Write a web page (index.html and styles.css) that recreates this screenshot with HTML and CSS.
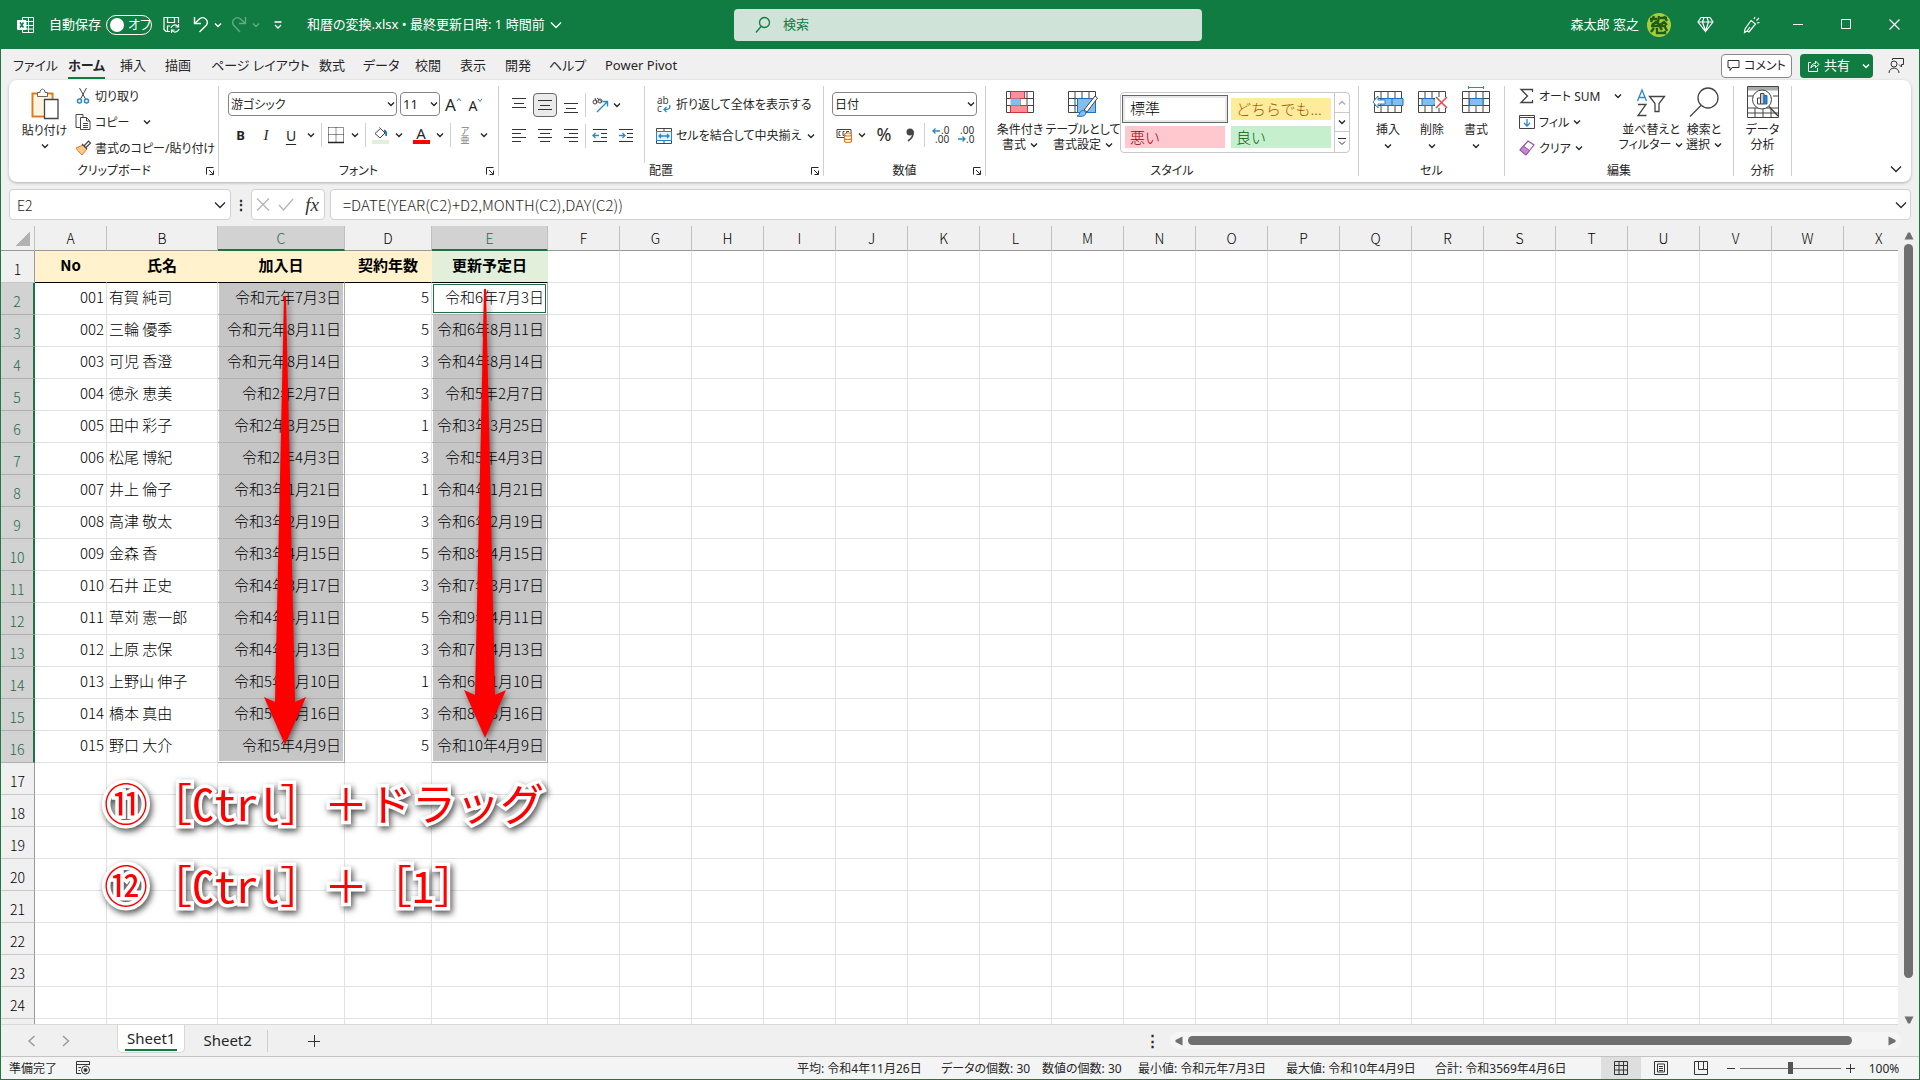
FILE: index.html
```html
<!DOCTYPE html>
<html lang="ja">
<head>
<meta charset="utf-8">
<title>和暦の変換.xlsx</title>
<link rel="stylesheet" href="styles.css">
</head>
<body>
<svg class="defs" aria-hidden="true">
  <symbol id="chev" viewBox="0 0 8 8"><path d="M1 2.5 4 5.5 7 2.5" fill="none" stroke="currentColor" stroke-width="1.4"/></symbol>
  <symbol id="chev-l" viewBox="0 0 12 12"><path d="M1 3.5 6 8.5 11 3.5" fill="none" stroke="currentColor" stroke-width="1.3"/></symbol>
  <symbol id="launch" viewBox="0 0 8 8"><path d="M.5 7.5V.5H7.5M3 3 7 7M7.5 3.5V7.5H3.5" fill="none" stroke="currentColor"/></symbol>
  <symbol id="table-grid" viewBox="0 0 28 22"><path d="M.5.5H27.5V21.5H.5ZM.5 7.5H27.5M.5 14.5H27.5M7 .5V21.5M14 .5V21.5M21 .5V21.5" fill="#fff" stroke="#444"/></symbol>
</svg>

<header class="titlebar">
  <svg class="ic" width="18" height="18" viewBox="0 0 18 18" fill="none" stroke="#fff"><path d="M5.5 4V1.500H16.500V16.500H5.500V14M5.500 5.500H16.500M9 9.500H16.500M9 13H16.500M11.500 1.500V16.500"/><path d="M.5 4.500H9V13.500H.5Z" fill="#fff"/><path d="M3 6.500 6.500 11.500M6.500 6.500 3 11.500" stroke="#107c41" stroke-width="1.500"/></svg>
  <label class="autosave"><span>自動保存</span><span class="switch"><input type="checkbox" role="switch"><span>オフ</span></span></label>
  <button class="tb" aria-label="保存"><svg width="17" height="18" viewBox="0 0 17 18" fill="none" stroke="#fff" stroke-width="1.200"><path d="M7 15.500H3L1 13.500V1.500H15.500V7M4.500 1.500V6.500H11.500V1.500M4.500 15V10H7"/><path d="M8 12A4 4 0 0 1 15 10.500M15.500 8V11H12.500M16 13A4 4 0 0 1 9 14.500M8.500 17V14H11.500"/></svg></button>
  <button class="tb undo" aria-label="元に戻す"><svg width="16" height="17" viewBox="0 0 16 17" fill="none" stroke="#fff" stroke-width="1.400"><path d="M1.500 1V7.500H8M1.500 7.500 7 2.500A4.700 4.700 0 0 1 13.500 9L6.500 16"/></svg><svg class="chev"><use href="#chev"/></svg></button>
  <button class="tb undo dim" aria-label="やり直し"><svg width="16" height="17" viewBox="0 0 16 17" fill="none" stroke="#fff" stroke-width="1.400"><path d="M14.500 1V7.500H8M14.500 7.500 9 2.500A4.700 4.700 0 0 0 2.500 9L9 16"/></svg><svg class="chev"><use href="#chev"/></svg></button>
  <button class="tb custom" aria-label="カスタマイズ"><svg width="8" height="8" viewBox="0 0 8 8" fill="none" stroke="#fff" stroke-width="1.300"><path d="M.5 1H7.500M1 4 4 7 7 4"/></svg></button>
  <button class="tb filename"><span>和暦の変換.xlsx • 最終更新日時: 1 時間前</span><svg class="chev-l"><use href="#chev-l"/></svg></button>
  <label class="search"><svg width="16" height="18" viewBox="0 0 16 18" fill="none" stroke="#107c41" stroke-width="1.300"><circle cx="9.500" cy="6.500" r="5"/><path d="M6 10.500 1 16.500"/></svg><input type="text" placeholder="検索" aria-label="検索"></label>
  <div class="account">
    <span>森太郎 窓之</span>
    <svg class="avatar" width="24" height="24" viewBox="0 0 24 24"><circle cx="12" cy="12" r="12" fill="#a6cf3c"/><path d="M3 6H10M7 3 4 9M12 3 11 9M13 5H20M17 3 20 8M5 12 9 9 13 12 17 9 20 12M7 15 4 19M10 15V20H18V18M13 14 15 17M18 14 20 18M4 13H19" fill="none" stroke="#1f5a17" stroke-width="2.400"/></svg>
  </div>
  <button class="tb w-tool" aria-label="プレミアム"><svg width="17" height="17" viewBox="0 0 17 17" fill="none" stroke="#fff" stroke-width="1.200"><path d="M4 1.500H13L16 6 8.500 15.500 1 6ZM1 6H16M5.500 6 8.500 15 11.500 6M5.500 6 7 1.500M11.500 6 10 1.500"/></svg></button>
  <button class="tb w-tool" aria-label="新機能"><svg width="17" height="18" viewBox="0 0 17 18" fill="none" stroke="#fff" stroke-width="1.200"><path d="M8 4.500 12.500 8 6 16 4 15 1.500 16.500 2 13ZM4 15 7 11M11 3 12 1M13.500 4.500 16 2M14 7 16.500 6.500"/></svg></button>
  <button class="tb w-win" aria-label="最小化"><svg width="11" height="11" stroke="#fff"><path d="M0 5.500H10"/></svg></button>
  <button class="tb w-win" aria-label="最大化"><svg width="11" height="11" fill="none" stroke="#fff"><path d="M.5.5H9.500V9.500H.5Z"/></svg></button>
  <button class="tb w-win" aria-label="閉じる"><svg width="11" height="11" stroke="#fff" stroke-width="1.200"><path d="M.5.5 10.500 10.500M10.500.5.5 10.500"/></svg></button>
</header>

<main class="window">
<nav class="tabs">
  <div class="tablist">
    <a href="#">ファイル</a><a href="#" class="on">ホーム</a><a href="#">挿入</a><a href="#">描画</a><a href="#">ページ レイアウト</a><a href="#">数式</a><a href="#">データ</a><a href="#">校閲</a><a href="#">表示</a><a href="#">開発</a><a href="#">ヘルプ</a><a href="#">Power Pivot</a>
  </div>
  <button class="comment"><svg width="13" height="13" viewBox="0 0 13 13" fill="none" stroke="#333"><path d="M1 1.500H12V8.500H5L3 11.500V8.500H1Z"/></svg>コメント</button>
  <button class="share"><svg width="13" height="14" viewBox="0 0 13 14" fill="none" stroke="#fff"><path d="M4 3.500H1.500V12.500H10.500V9M4 9C4 6 6 4.500 8.500 4.500V2L12 5.500 8.500 8.500V6.500C6.500 6.500 5 7 4 9Z"/></svg>共有<svg class="chev"><use href="#chev"/></svg></button>
  <button class="person" aria-label="共同編集"><svg width="17" height="17" viewBox="0 0 17 17" fill="none" stroke="#333"><path d="M4.500 3V1.500H15.500V7.500H13.500V10L11 7.500"/><circle cx="6" cy="7" r="3"/><path d="M1 16C1 9.500 11 9.500 11 16"/></svg></button>
</nav>

<section class="ribbon">
  <div class="group g-clip">
    <div class="body">
      <button class="big paste"><svg width="28" height="32" viewBox="0 0 28 32"><path d="M1.500 5.500H21.500V28.500H1.500Z" fill="#fff" stroke="#e07b1a" stroke-width="2"/><path d="M3.500 7.500H19.500V26.500H3.500Z" fill="#fff3dc"/><path d="M6.500 8.500V4.500H9C9 0 14 0 14 4.500H16.500V8.500Z" fill="#fff" stroke="#666"/><path d="M13.500 11.500H27V30.500H13.500Z" fill="#fff" stroke="#444" stroke-width="1.300"/></svg><span>貼り付け</span><svg class="chev"><use href="#chev"/></svg></button>
      <div class="stack">
        <button class="item"><svg width="16" height="18" viewBox="0 0 16 18" fill="none"><path d="M4.500 1 10.500 12M11.500 1 5.500 12" stroke="#444"/><circle cx="4.500" cy="14" r="2" stroke="#2b88c8" stroke-width="1.500"/><circle cx="11.500" cy="14" r="2" stroke="#2b88c8" stroke-width="1.500"/></svg><span>切り取り</span></button>
        <button class="item"><svg width="16" height="18" viewBox="0 0 16 18" fill="none" stroke="#444"><path d="M5 14.500H1V1.500H8V4M5.500 4.500H11.500L15 8V16.500H5.500ZM11.500 4.500V8H15M8 10.500H13M8 12.500H13M8 14.500H13"/></svg><span>コピー</span><svg class="chev push"><use href="#chev"/></svg></button>
        <button class="item"><svg width="16" height="16" viewBox="0 0 16 16"><path d="M1 8 8 5 12 9 7 15C5 13 3 11 1 8Z" fill="#f7c98b" stroke="#e07b1a"/><path d="M7 4 12 9M9 6 13.500 1 15.500 3 11 7.500" fill="#fff" stroke="#444" stroke-width="1.200"/></svg><span>書式のコピー/貼り付け</span></button>
      </div>
    </div>
    <div class="cap"><span>クリップボード</span><svg class="launch"><use href="#launch"/></svg></div>
  </div>

  <div class="group g-font">
    <div class="body rows">
      <div class="font-line">
        <span class="combo"><select aria-label="フォント"><option>游ゴシック</option></select><svg class="chev"><use href="#chev"/></svg></span>
        <span class="combo"><select aria-label="サイズ"><option>11</option></select><svg class="chev"><use href="#chev"/></svg></span>
        <button class="tool grow" aria-label="拡大">A<svg width="6" height="5" viewBox="0 0 6 5" fill="none" stroke="#2b88c8"><path d="M1 4 3 1.500 5 4"/></svg></button>
        <button class="tool shrink" aria-label="縮小">A<svg width="6" height="5" viewBox="0 0 6 5" fill="none" stroke="#2b88c8"><path d="M1 1 3 3.500 5 1"/></svg></button>
      </div>
      <div class="font-tools">
        <button class="tool b">B</button><button class="tool i">I</button><button class="tool u">U</button><svg class="chev"><use href="#chev"/></svg><i class="vs"></i>
        <button class="tool" aria-label="罫線"><svg width="16" height="16" viewBox="0 0 16 16" stroke="#222" fill="none"><path d="M.5.5H15.500V15.500M.5.5V15.500M8 .5V15.500M.5 7.500H15.500" stroke-dasharray="1 1"/><path d="M0 15.500H16" stroke-width="1.500"/></svg></button><svg class="chev"><use href="#chev"/></svg><i class="vs"></i>
        <button class="tool" aria-label="塗りつぶし"><svg width="17" height="18" viewBox="0 0 17 18" fill="none"><path d="M7.500 1.500 13 7 8 12 3 7.500 9 2" stroke="#444"/><path d="M12 4.500C14.500 5 14.500 7 14 10" stroke="#1e6fc0" stroke-width="1.800"/><path d="M0 14H17V18H0Z" fill="#e2efda"/></svg></button><svg class="chev"><use href="#chev"/></svg>
        <button class="tool fcolor">A</button><svg class="chev"><use href="#chev"/></svg><i class="vs"></i>
        <button class="tool ruby"><span>ア</span><span>亜</span></button><svg class="chev"><use href="#chev"/></svg>
      </div>
    </div>
    <div class="cap"><span>フォント</span><svg class="launch"><use href="#launch"/></svg></div>
  </div>

  <div class="group g-align">
    <div class="body">
      <div class="rows">
        <div class="align-tools">
          <button class="tool" aria-label="上揃え"><svg width="16" height="16" viewBox="0 0 16 16" stroke="#333"><path d="M1 1.500H15M3 6.500H13M1 10.500H15"/></svg></button>
          <button class="tool sel" aria-label="上下中央揃え"><svg width="16" height="16" viewBox="0 0 16 16" stroke="#333"><path d="M1 3.500H15M3 8.500H13M1 12.500H15"/></svg></button>
          <button class="tool" aria-label="下揃え"><svg width="16" height="16" viewBox="0 0 16 16" stroke="#333"><path d="M1 6.500H15M3 11.500H13M1 15.500H15"/></svg></button>
          <i class="vs"></i>
          <button class="tool" aria-label="方向"><svg width="17" height="16" viewBox="0 0 17 16" fill="none"><circle cx="3" cy="5" r="2" stroke="#444"/><circle cx="8" cy="4" r="2" stroke="#444"/><path d="M3 1 5 6M5 1 10 5" stroke="#444"/><path d="M5 15 15 5M10.500 4.500H15.500V9.500" stroke="#2b88c8" stroke-width="1.400"/></svg></button>
          <svg class="chev"><use href="#chev"/></svg>
        </div>
        <div class="align-tools">
          <button class="tool" aria-label="左揃え"><svg width="16" height="16" viewBox="0 0 16 16" stroke="#333"><path d="M1 1.500H15M1 5.500H10M1 9.500H15M1 13.500H10"/></svg></button>
          <button class="tool" aria-label="中央揃え"><svg width="16" height="16" viewBox="0 0 16 16" stroke="#333"><path d="M1 1.500H15M3 5.500H13M1 9.500H15M3 13.500H13"/></svg></button>
          <button class="tool" aria-label="右揃え"><svg width="16" height="16" viewBox="0 0 16 16" stroke="#333"><path d="M1 1.500H15M6 5.500H15M1 9.500H15M6 13.500H15"/></svg></button>
          <i class="vs"></i>
          <button class="tool" aria-label="インデントを減らす"><svg width="16" height="16" viewBox="0 0 16 16" fill="none" stroke="#333"><path d="M1 1.500H15M9 5.500H15M9 9.500H15M1 13.500H15"/><path d="M1 7.500H7M3.500 5 1 7.500 3.500 10" stroke="#2b88c8" stroke-width="1.300"/></svg></button>
          <button class="tool" aria-label="インデントを増やす"><svg width="16" height="16" viewBox="0 0 16 16" fill="none" stroke="#333"><path d="M1 1.500H15M9 5.500H15M9 9.500H15M1 13.500H15"/><path d="M1 7.500H7M4.500 5 7 7.500 4.500 10" stroke="#2b88c8" stroke-width="1.300"/></svg></button>
        </div>
      </div>
      <div class="rows wraps">
        <button class="item wrap"><svg width="16" height="18" viewBox="0 0 16 18"><text x="1" y="8" font-size="10" fill="#444">ab</text><text x="1" y="16" font-size="10" fill="#444">c</text><path d="M13.500 9C15 13 12 13.500 8 13.500M10.500 11 8 13.500 10.500 16" fill="none" stroke="#2b88c8" stroke-width="1.300"/></svg><span>折り返して全体を表示する</span></button>
        <button class="item wrap"><svg width="16" height="16" viewBox="0 0 16 16" fill="none" stroke="#444"><path d="M.5.5H15.500V15.500H.5ZM8 .5V3.500M8 12.500V15.500"/><path d="M.5 3.500H15.500V12.500H.5Z" fill="#e5f1fb" stroke="#2b88c8"/><path d="M3 8H13M5 6 3 8 5 10M11 6 13 8 11 10" stroke="#2b88c8" stroke-width="1.300"/></svg><span>セルを結合して中央揃え</span><svg class="chev end"><use href="#chev"/></svg></button>
      </div>
    </div>
    <div class="cap"><span>配置</span><svg class="launch"><use href="#launch"/></svg></div>
  </div>

  <div class="group g-num">
    <div class="body rows">
      <span class="combo"><select aria-label="表示形式"><option>日付</option></select><svg class="chev"><use href="#chev"/></svg></span>
      <div class="num-tools">
        <button class="tool" aria-label="通貨"><svg width="17" height="16" viewBox="0 0 17 16" fill="none" stroke="#444"><path d="M1 2.500H15V10.500H1ZM4.500 4.500H3V8.500H4.500M8.500 4.500H7V8.500H8M10.500 6V4.500H13"/><path d="M8.500 7.500V14C8.500 16 15.500 16 15.500 14V7.500C15.500 5.500 8.500 5.500 8.500 7.500C8.500 9.500 15.500 9.500 15.500 7.500M8.500 11C8.500 13 15.500 13 15.500 11" fill="#fff" stroke="#e07b1a" stroke-width="1.200"/></svg></button><svg class="chev"><use href="#chev"/></svg>
        <button class="tool pct">%</button>
        <button class="tool" aria-label="桁区切り"><svg width="8" height="14" viewBox="0 0 8 14"><circle cx="4" cy="4" r="3.500" fill="#444"/><path d="M7 3C8 8 5 11 2 13" fill="none" stroke="#444" stroke-width="1.600"/></svg></button>
        <i class="vs"></i>
        <button class="tool" aria-label="小数点以下を増やす"><svg width="17" height="18" viewBox="0 0 17 18"><path d="M1 5H8M3.500 2.500 1 5 3.500 7.500" fill="none" stroke="#2b88c8" stroke-width="1.300"/><text x="9" y="8" font-size="10" fill="#333">.0</text><text x="3" y="17" font-size="10" fill="#333">.00</text></svg></button>
        <button class="tool" aria-label="小数点以下を減らす"><svg width="17" height="18" viewBox="0 0 17 18"><text x="3" y="8" font-size="10" fill="#333">.00</text><path d="M1 13H8M5.500 10.500 8 13 5.500 15.500" fill="none" stroke="#2b88c8" stroke-width="1.300"/><text x="9" y="17" font-size="10" fill="#333">.0</text></svg></button>
      </div>
    </div>
    <div class="cap"><span>数値</span><svg class="launch"><use href="#launch"/></svg></div>
  </div>

  <div class="group g-style">
    <div class="body">
      <button class="big two"><svg width="28" height="22" viewBox="0 0 28 22"><use href="#table-grid" width="28" height="22"/><path d="M4.500.5H18.500V7.500H4.500ZM4.500 14.500H21.500V21.500H4.500Z" fill="#ff8f96" stroke="#d13438"/><path d="M4.500 7.500H14V14.500H4.500Z" fill="#83beec"/></svg><span>条件付き<br>書式<svg class="chev"><use href="#chev"/></svg></span></button>
      <button class="big two wide"><svg width="30" height="28" viewBox="0 0 30 28"><use href="#table-grid" width="28" height="22"/><path d="M9.500 7.500H27.500V21.500H9.500Z" fill="#83beec" stroke="#1e6fc0"/><path d="M16 19 27 5 29.500 7 19 21Z" fill="#fff" stroke="#444"/><path d="M9 25C12 25 11 19 15.500 19.500 20 21 18 27 9 25Z" fill="#83beec" stroke="#1e6fc0"/></svg><span>テーブルとして<br>書式設定<svg class="chev"><use href="#chev"/></svg></span></button>
      <div class="gallery">
        <button class="st normal">標準</button><button class="st neutral">どちらでも...</button>
        <button class="st bad">悪い</button><button class="st good">良い</button>
        <div class="gscroll"><button class="off" aria-label="上"><svg class="chev flip"><use href="#chev"/></svg></button><button aria-label="下"><svg class="chev"><use href="#chev"/></svg></button><button aria-label="その他"><svg width="8" height="8" viewBox="0 0 8 8" fill="none" stroke="#333"><path d="M0 .5H8M1 3.500 4 6.500 7 3.500"/></svg></button></div>
      </div>
    </div>
    <div class="cap"><span>スタイル</span></div>
  </div>

  <div class="group g-cell">
    <div class="body">
      <button class="big one"><svg width="32" height="28" viewBox="0 0 32 28"><use href="#table-grid" x="2" y="5" width="28" height="22"/><path d="M9 12.500H31V19.500H9Z" fill="#83beec" stroke="#1e6fc0"/><path d="M20 12.500V19.500" stroke="#1e6fc0"/><path d="M6 10 1 16 6 22V18H13V14H6Z" fill="#fff" stroke="#2b88c8"/></svg><span>挿入</span><svg class="chev"><use href="#chev"/></svg></button>
      <button class="big one"><svg width="32" height="28" viewBox="0 0 32 28"><use href="#table-grid" x="2" y="5" width="28" height="22"/><path d="M6 12.500H17L21 16 17 19.500H6Z" fill="#83beec" stroke="#1e6fc0"/><path d="M19 11H31V22H19Z" fill="#fff"/><path d="M20 11 31 22M31 11 20 22" stroke="#e0484d" stroke-width="1.500"/></svg><span>削除</span><svg class="chev"><use href="#chev"/></svg></button>
      <button class="big one"><svg width="32" height="28" viewBox="0 0 32 28"><use href="#table-grid" x="2" y="5" width="28" height="22"/><path d="M9.500 12.500H23V19.500H9.500Z" fill="#83beec" stroke="#1e6fc0"/><path d="M8.500 0V3M23.500 0V3M8.500 1.500H23.500" stroke="#2b88c8"/></svg><span>書式</span><svg class="chev"><use href="#chev"/></svg></button>
    </div>
    <div class="cap"><span>セル</span></div>
  </div>

  <div class="group g-edit">
    <div class="body">
      <div class="stack">
        <button class="item"><svg width="16" height="16" viewBox="0 0 16 16" fill="none" stroke="#444" stroke-width="1.300"><path d="M13.500 4V1.500H2L8.500 8 2 14.500H13.500V12"/></svg><span>オート SUM</span><svg class="chev end"><use href="#chev"/></svg></button>
        <button class="item"><svg width="16" height="16" viewBox="0 0 16 16" fill="none" stroke="#444"><path d="M.5 1.500H15.500V14.500H.5ZM.5 3.500H15.500"/><path d="M8 5V12M5 9 8 12 11 9" stroke="#2b88c8" stroke-width="1.300"/></svg><span>フィル</span><svg class="chev"><use href="#chev"/></svg></button>
        <button class="item"><svg width="16" height="16" viewBox="0 0 16 16"><path d="M9 1 15 5 7 15 1 10Z" fill="#fff" stroke="#9b4fa5" stroke-width="1.200"/><path d="M4.500 6 10.500 10.500 7 15 1 10Z" fill="#c489cc" stroke="#9b4fa5"/></svg><span>クリア</span><svg class="chev"><use href="#chev"/></svg></button>
      </div>
      <button class="big sort"><svg width="30" height="28" viewBox="0 0 30 28" fill="none"><path d="M1.500 12 6 1 10.500 12M3 8.500H9" stroke="#2b88c8" stroke-width="1.300"/><path d="M2 15.500H10L2 26.500H10.500M13.500 7.500H28.500L23 14.500V22.500H19V14.500Z" stroke="#444" stroke-width="1.300"/></svg><span>並べ替えと<br>フィルター<svg class="chev"><use href="#chev"/></svg></span></button>
      <button class="big find"><svg width="30" height="30" viewBox="0 0 30 30" fill="none" stroke="#444" stroke-width="1.300"><circle cx="19" cy="11" r="10"/><path d="M12 18.500 1 29.500"/></svg><span>検索と<br>選択<svg class="chev"><use href="#chev"/></svg></span></button>
    </div>
    <div class="cap"><span>編集</span></div>
  </div>

  <div class="group g-data">
    <div class="body">
      <button class="big find"><svg width="32" height="32" viewBox="0 0 32 32" fill="none" stroke="#444"><path d="M.5.5H31.500V31.500H.5ZM.5 22H31.500M.5 27H31.500M8 22V31M16 22V31M24 22V31M.5 10H6M26 10H31"/><path d="M1 1H31V4.500H1Z" fill="#aaa" stroke="none"/><circle cx="15" cy="13.500" r="9.500" fill="#fff"/><path d="M10.500 12H13.500V18H10.500Z"/><path d="M13.500 7.500H17V18H13.500Z" fill="#ccc"/><path d="M17 9.500H20V18H17Z" fill="#2b88c8" stroke="#1e6fc0"/><path d="M22 20.500 31 30" stroke-width="1.500"/></svg><span>データ<br>分析</span></button>
    </div>
    <div class="cap"><span>分析</span></div>
  </div>
  <button class="collapse" aria-label="リボンを折りたたむ"><svg class="chev-l"><use href="#chev-l"/></svg></button>
</section>

<section class="formula">
  <label class="namebox"><input type="text" value="E2" aria-label="名前ボックス"><svg class="chev-l"><use href="#chev-l"/></svg></label>
  <span class="dots">⋮</span>
  <div class="fxbox"><svg width="12" height="13" stroke="#b5b5b5" stroke-width="1.300"><path d="M0 .5 12 12.500M12 .5 0 12.500"/></svg><svg width="16" height="13" fill="none" stroke="#b5b5b5" stroke-width="1.300"><path d="M1 7 5.500 12 15 1"/></svg><button class="fx">fx</button></div>
  <label class="fbar"><input type="text" value="=DATE(YEAR(C2)+D2,MONTH(C2),DAY(C2))" aria-label="数式バー"><svg class="chev-l"><use href="#chev-l"/></svg></label>
</section>

<section class="work">
  <div class="sheet">
    <table>
      <colgroup><col class="c-n"><col class="c-a"><col class="c-b"><col class="c-c"><col class="c-d"><col class="c-e"><col span="18" class="c-f"><col></colgroup>
      <thead><tr><th class="corner"></th><th>A</th><th>B</th><th class="on">C</th><th>D</th><th class="on">E</th><th>F</th><th>G</th><th>H</th><th>I</th><th>J</th><th>K</th><th>L</th><th>M</th><th>N</th><th>O</th><th>P</th><th>Q</th><th>R</th><th>S</th><th>T</th><th>U</th><th>V</th><th>W</th><th class="last">X</th></tr></thead>
      <tbody>
        <tr class="head"><th>1</th><td>No</td><td>氏名</td><td>加入日</td><td>契約年数</td><td class="g">更新予定日</td><td class="fill" colspan="19"></td></tr>
        <tr class="d first"><th>2</th><td>001</td><td>有賀 純司</td><td>令和元年7月3日</td><td>5</td><td class="active">令和6年7月3日</td><td class="fill" colspan="19"></td></tr>
        <tr class="d"><th>3</th><td>002</td><td>三輪 優季</td><td>令和元年8月11日</td><td>5</td><td>令和6年8月11日</td><td class="fill" colspan="19"></td></tr>
        <tr class="d"><th>4</th><td>003</td><td>可児 香澄</td><td>令和元年8月14日</td><td>3</td><td>令和4年8月14日</td><td class="fill" colspan="19"></td></tr>
        <tr class="d"><th>5</th><td>004</td><td>徳永 恵美</td><td>令和2年2月7日</td><td>3</td><td>令和5年2月7日</td><td class="fill" colspan="19"></td></tr>
        <tr class="d"><th>6</th><td>005</td><td>田中 彩子</td><td>令和2年3月25日</td><td>1</td><td>令和3年3月25日</td><td class="fill" colspan="19"></td></tr>
        <tr class="d"><th>7</th><td>006</td><td>松尾 博紀</td><td>令和2年4月3日</td><td>3</td><td>令和5年4月3日</td><td class="fill" colspan="19"></td></tr>
        <tr class="d"><th>8</th><td>007</td><td>井上 倫子</td><td>令和3年1月21日</td><td>1</td><td>令和4年1月21日</td><td class="fill" colspan="19"></td></tr>
        <tr class="d"><th>9</th><td>008</td><td>高津 敬太</td><td>令和3年2月19日</td><td>3</td><td>令和6年2月19日</td><td class="fill" colspan="19"></td></tr>
        <tr class="d"><th>10</th><td>009</td><td>金森 香</td><td>令和3年4月15日</td><td>5</td><td>令和8年4月15日</td><td class="fill" colspan="19"></td></tr>
        <tr class="d"><th>11</th><td>010</td><td>石井 正史</td><td>令和4年3月17日</td><td>3</td><td>令和7年3月17日</td><td class="fill" colspan="19"></td></tr>
        <tr class="d"><th>12</th><td>011</td><td>草苅 憲一郎</td><td>令和4年4月11日</td><td>5</td><td>令和9年4月11日</td><td class="fill" colspan="19"></td></tr>
        <tr class="d"><th>13</th><td>012</td><td>上原 志保</td><td>令和4年4月13日</td><td>3</td><td>令和7年4月13日</td><td class="fill" colspan="19"></td></tr>
        <tr class="d"><th>14</th><td>013</td><td>上野山 伸子</td><td>令和5年1月10日</td><td>1</td><td>令和6年1月10日</td><td class="fill" colspan="19"></td></tr>
        <tr class="d"><th>15</th><td>014</td><td>橋本 真由</td><td>令和5年3月16日</td><td>3</td><td>令和8年3月16日</td><td class="fill" colspan="19"></td></tr>
        <tr class="d end"><th>16</th><td>015</td><td>野口 大介</td><td>令和5年4月9日</td><td>5</td><td>令和10年4月9日</td><td class="fill" colspan="19"></td></tr>
        <tr><th>17</th><td></td><td></td><td></td><td></td><td></td><td class="fill" colspan="19"></td></tr>
        <tr><th>18</th><td></td><td></td><td></td><td></td><td></td><td class="fill" colspan="19"></td></tr>
        <tr><th>19</th><td></td><td></td><td></td><td></td><td></td><td class="fill" colspan="19"></td></tr>
        <tr><th>20</th><td></td><td></td><td></td><td></td><td></td><td class="fill" colspan="19"></td></tr>
        <tr><th>21</th><td></td><td></td><td></td><td></td><td></td><td class="fill" colspan="19"></td></tr>
        <tr><th>22</th><td></td><td></td><td></td><td></td><td></td><td class="fill" colspan="19"></td></tr>
        <tr><th>23</th><td></td><td></td><td></td><td></td><td></td><td class="fill" colspan="19"></td></tr>
        <tr><th>24</th><td></td><td></td><td></td><td></td><td></td><td class="fill" colspan="19"></td></tr>
        <tr><th></th><td></td><td></td><td></td><td></td><td></td><td class="fill" colspan="19"></td></tr>
      </tbody>
    </table>
    <svg class="arrow a1" width="60" height="460" viewBox="0 0 60 460"><path d="M29 2H31L40 408 51 403 30 451 9 403 20 408Z" fill="#f00"/></svg>
    <svg class="arrow a2" width="60" height="460" viewBox="0 0 60 460"><path d="M29 2H31L40 408 51 403 30 451 9 403 20 408Z" fill="#f00"/></svg>
    <p class="note n1">⑪［<span>Ctrl</span>］＋ドラッグ</p>
    <p class="note n2">⑫［<span>Ctrl</span>］＋［<span>1</span>］</p>
  </div>
  <div class="vscroll"><svg width="10" height="8" viewBox="0 0 10 8" fill="#707070"><path d="M4 .5H6L9.500 7.500H.5Z"/></svg><i></i><svg class="dn" width="10" height="8" viewBox="0 0 10 8" fill="#707070"><path d="M.5.5H9.500L6 7.500H4Z"/></svg></div>
</section>

<section class="sheetbar">
  <button class="nav" aria-label="前へ"><svg width="8" height="10" fill="none" stroke="#999" stroke-width="1.400"><path d="M6.500 0 1 5 6.500 10"/></svg></button>
  <button class="nav" aria-label="次へ"><svg width="8" height="10" fill="none" stroke="#999" stroke-width="1.400"><path d="M1 0 6.500 5 1 10"/></svg></button>
  <button class="stab on"><span>Sheet1</span></button>
  <button class="stab"><span>Sheet2</span></button>
  <button class="plus" aria-label="新しいシート"><svg width="12" height="12" stroke="#333"><path d="M0 6.500H12M6.500 0V12"/></svg></button>
  <span class="hdots">⋮</span>
  <div class="hscroll"><svg width="8" height="10" fill="#707070"><path d="M7.500.5V9.500L.5 6V4Z"/></svg><i></i><svg width="8" height="10" fill="#707070"><path d="M.5.5V9.500L7.500 6V4Z"/></svg></div>
</section>

<footer class="status">
  <span class="ready">準備完了</span>
  <svg width="15" height="14" viewBox="0 0 15 14" fill="none" stroke="#333"><path d="M5 12.500H.5V.5H13.500V4M.5 3.500H13.500M2.500 6.500H5M2.500 9.500H4"/><circle cx="9.500" cy="9" r="4"/><circle cx="9.500" cy="9" r="1.500" fill="#333"/></svg>
  <div class="stats"><span>平均: 令和4年11月26日</span><span>データの個数: 30</span><span>数値の個数: 30</span><span>最小値: 令和元年7月3日</span><span>最大値: 令和10年4月9日</span><span>合計: 令和3569年4月6日</span></div>
  <button class="view on" aria-label="標準"><svg width="14" height="14" fill="none" stroke="#333"><path d="M.5.5H13.500V13.500H.5ZM.5 4.500H13.500M.5 9H13.500M5 .5V13.500M9.500.5V13.500"/></svg></button>
  <button class="view" aria-label="ページレイアウト"><svg width="14" height="14" fill="none" stroke="#333"><path d="M.5.5H13.500V13.500H.5ZM3.500 3H10.500V11H3.500ZM5 5.500H9M5 7.500H9M5 9.500H9"/></svg></button>
  <button class="view" aria-label="改ページ"><svg width="14" height="14" fill="none" stroke="#333"><path d="M.5.5H13.500V13.500H.5ZM4.500.5V8.500H9.500V.5M9.500 8.500H13.500"/></svg></button>
  <button class="zb" aria-label="縮小"><svg width="8" height="9" stroke="#333"><path d="M0 4.500H8"/></svg></button>
  <input class="zoom" type="range" min="0" max="100" value="50" aria-label="ズーム">
  <button class="zb" aria-label="拡大"><svg width="9" height="9" stroke="#333"><path d="M0 4.500H9M4.500 0V9"/></svg></button>
  <button class="pc">100%</button>
</footer>
</main>
</body>
</html>
```
FILE: styles.css
```css
* { box-sizing: border-box; }
body {
  margin: 0; height: 100vh; display: flex; flex-direction: column; overflow: hidden;
  font: 13px/15px "Noto Sans", "Noto Sans CJK JP", sans-serif;
  font-feature-settings: "palt"; color: #262626; background: #f0f0f0;
}
button, input, select { font: inherit; font-feature-settings: inherit; color: inherit; background: none; border: 0; padding: 0; margin: 0; white-space: nowrap; }
a { color: inherit; text-decoration: none; white-space: nowrap; }
svg { flex: none; display: block; overflow: visible; }
.defs { display: none; }
.chev { width: 8px; height: 8px; }
.chev-l { width: 12px; height: 12px; }
.launch { width: 8px; height: 8px; }

.titlebar { flex: none; height: 49px; background: #107c41; color: #fff; display: flex; align-items: center; padding: 0 2px 0 17px; position: relative; }
.tb { display: flex; align-items: center; justify-content: center; }
.autosave { display: flex; align-items: center; gap: 5px; margin-left: 14px; width: 114px; white-space: nowrap; }
.switch { display: grid; align-items: center; }
.switch > * { grid-area: 1 / 1; }
.switch input { appearance: none; width: 46px; height: 20px; border: 1px solid #fff; border-radius: 10px; display: flex; align-items: center; padding-left: 3px; }
.switch input::before { content: ""; width: 14px; height: 14px; border-radius: 50%; background: #fff; }
.switch span { padding-left: 22px; }
.undo { margin-left: 13px; gap: 5px; width: 29px; }
.undo + .undo { margin-left: 9px; }
.dim { opacity: .35; }
.custom { margin-left: 14px; }
.filename { margin-left: 25px; gap: 5px; }
.search { position: absolute; left: 734px; right: 718px; height: 32px; background: #cfe3d8; border-radius: 4px; display: flex; align-items: center; gap: 12px; padding-left: 21px; }
.search input { flex: 1; outline: 0; }
.search input::placeholder { color: #107c41; opacity: 1; }
.account { margin-left: auto; display: flex; align-items: center; gap: 8px; margin-right: 11px; }
.w-tool { width: 46px; }
.w-win { width: 48px; }

.window { flex: 1; min-height: 0; display: flex; flex-direction: column; border: solid #1b7b45; border-width: 0 1px 1px; }
.tabs { flex: none; height: 31px; display: flex; align-items: center; padding: 2px 8px 0 12px; }
.tablist { display: grid; grid-template-columns: 55px 52px 45px 46px 108px 44px 52px 45px 45px 44px 56px auto; justify-items: start; }
.tablist a { padding: 4px 0 3px; line-height: 17px; border-bottom: 2px solid transparent; }
.tablist .on { font-weight: 700; border-color: #107c41; }
.comment { margin-left: auto; width: 71px; height: 24px; background: #fff; border: 1px solid #888; border-radius: 4px; display: flex; align-items: center; justify-content: center; gap: 4px; font-size: 12px; }
.share { margin-left: 8px; width: 73px; height: 24px; background: #107c41; color: #fff; border-radius: 4px; display: flex; align-items: center; gap: 4px; padding-left: 7px; }
.share .chev { margin-left: 8px; }
.person { margin: 0 6px 0 15px; }

.ribbon { flex: none; height: 102px; margin: 0 8px; background: #fff; border-radius: 8px; box-shadow: 0 1px 3px #0004; display: flex; padding: 6px 0 6px 1px; font-size: 12px; }
.group { flex: none; border-right: 1px solid #d0d0d0; display: flex; flex-direction: column; }
.body { flex: 1; display: flex; }
.body > * { flex: none; }
.cap { height: 15px; margin-bottom: -2px; display: grid; align-items: center; text-align: center; }
.cap > * { grid-area: 1 / 1; }
.cap .launch { justify-self: end; margin-right: 4px; }
.g-clip { width: 209px; } .g-font { width: 280px; } .g-align { width: 325px; } .g-num { width: 162px; }
.g-style { width: 373px; } .g-cell { width: 146px; } .g-edit { width: 229px; } .g-data { width: 58px; }
.big { display: flex; flex-direction: column; align-items: center; text-align: center; }
.big > span { white-space: nowrap; line-height: 15px; }
.big > span .chev { display: inline-block; margin-left: 4px; }
.paste { width: 69px; padding-top: 2px; gap: 3px; }
.paste .chev { margin-top: 1px; }
.stack { display: flex; flex-direction: column; gap: 2px; margin-top: -2px; }
.item { display: flex; align-items: center; gap: 4px; height: 24px; }
.stack .push { margin-left: 10px; }
.g-clip .stack { margin-left: -4px; }

.rows { display: flex; flex-direction: column; gap: 6px; padding-top: 6px; }
.combo { display: grid; align-items: center; }
.combo > * { grid-area: 1 / 1; }
.combo select { appearance: none; width: 100%; height: 24px; border: 1px solid #868686; border-radius: 4px; padding-left: 2px; background: #fff; outline: 0; }
.combo .chev { justify-self: end; margin-right: 2px; pointer-events: none; }
.combo + .combo select { font-size: 13px; }
.g-font .body { padding-left: 9px; }
.font-line { display: grid; grid-template-columns: 169px 40px 21px 18px; column-gap: 3px; align-items: center; }
.tool { display: flex; align-items: center; justify-content: center; }
.grow { font-size: 17px; } .shrink { font-size: 14px; padding-top: 2px; }
.grow svg, .shrink svg { align-self: flex-start; }
.font-tools { display: grid; grid-template-columns: 25px 26px 24px 15px 6px 23px 15px 7px 23px 14px 30px 8px 12px 18px 20px; height: 26px; align-items: center; justify-items: center; }
.vs { width: 1px; height: 24px; background: #d0d0d0; }
.b { font-weight: 700; font-size: 13px; } .i { font-style: italic; font-family: "Liberation Serif", serif; font-size: 15px; } .u { text-decoration: underline; text-underline-offset: 3px; font-size: 14px; }
.fcolor { font-size: 15px; line-height: 14px; width: 17px; border-bottom: 4px solid #f00; }
.ruby { flex-direction: column; font-size: 9px; line-height: 9px; color: #777; }
.g-align .body { padding-left: 7px; }
.g-align .rows { width: 138px; }
.align-tools { display: grid; grid-template-columns: 26px 26px 26px 3px 26px 26px; height: 25px; align-items: center; justify-items: center; }
.align-tools .chev { justify-self: start; }
.sel { width: 24px; height: 24px; border: 1px solid #666; border-radius: 4px; background: #ebebeb; }
.g-align .wraps { width: 175px; border-left: 1px solid #d0d0d0; padding-left: 11px; }
.wrap { height: 25px; }
.wrap .end { margin-left: 2px; }
.g-num .body { padding: 6px 8px 0; }
.num-tools { display: grid; grid-template-columns: 24px 12px 32px 20px 8px 24px 26px; height: 25px; align-items: center; justify-items: center; }
.pct { font-size: 18px; }
.g-style .body { padding-left: 1px; }
.two { width: 66px; padding-top: 5px; }
.two > svg { margin-bottom: 9px; }
.wide { width: 60px; } .wide > svg { margin-bottom: 3px; }
.gallery { margin: 6px 0 0 7px; width: 230px; height: 61px; border: 1px solid #c8c8c8; border-radius: 4px; display: grid; grid-template-columns: 107px 100px 15px; column-gap: 3px; row-gap: 3px; grid-template-rows: 28px 22px; padding-top: 2px; font-feature-settings: normal; }
.st { text-align: left; padding-left: 5px; font-size: 15px; line-height: 20px; height: 22px; align-self: center; font-family: "Noto Sans CJK JP", sans-serif; font-weight: 300; }
.normal { border: 1px solid #666; box-shadow: inset 0 0 0 2px #e8e8e8; margin-left: 1px; width: 106px; height: 28px; padding: 0 0 2px 7px; color: #000; }
.neutral { background: #ffeb9c; color: #9c5700; }
.bad { background: #ffc7ce; color: #9c0006; margin: 0 3px 0 4px; }
.good { background: #c6efce; color: #006100; }
.gscroll { grid-area: 1 / 3 / 3 / 4; margin-top: -2px; height: 59px; border-left: 1px solid #c8c8c8; display: grid; grid-template-rows: 20px 19px 20px; }
.gscroll button { display: grid; place-items: center; border-bottom: 1px solid #c8c8c8; }
.gscroll button:last-child { border: 0; }
.gscroll .off { color: #aaa; }
.flip { transform: rotate(180deg); }
.g-cell .body { padding-left: 7px; }
.one { width: 44px; padding-top: 0; gap: 8px; }
.one .chev { margin-top: -3px; }
.g-edit .body { padding-left: 14px; }
.g-edit .stack { width: 101px; }
.g-edit .end { margin-left: 10px; }
.sort { width: 62px; padding-top: 3px; gap: 5px; }
.find { width: 42px; padding-top: 1px; gap: 5px; margin-left: 1px; }
.g-data .find { width: 57px; gap: 4px; padding-top: 0; margin-left: 0; }
.collapse { margin: auto 9px 1px auto; }

.formula { flex: none; height: 44px; display: flex; align-items: flex-start; padding: 7px 8px 0; font-family: "Noto Sans CJK JP", sans-serif; font-size: 14px; font-weight: 300; }
.namebox, .fxbox, .fbar { height: 31px; background: #fff; border: 1px solid #d0d0d0; border-radius: 4px; display: flex; align-items: center; }
.namebox { width: 222px; padding: 0 4px 0 7px; }
.namebox input, .fbar input { flex: 1; min-width: 0; outline: 0; }
.namebox input { padding-top: 2px; }
.dots { width: 20px; text-align: center; line-height: 30px; font-weight: 700; }
.fxbox { width: 74px; padding: 0 5px; gap: 9px; }
.fx { font: italic 19px/20px "Liberation Serif", serif; margin-left: auto; color: #333; }
.fbar { flex: 1; margin-left: 5px; padding: 0 3px 0 12px; font-size: 15px; }

.work { flex: 1; min-height: 0; display: flex; }
.sheet { flex: 1; min-width: 0; overflow: hidden; position: relative; background: #fff; border-bottom: 1px solid #d8d8d8; font: 300 15px/20px "Noto Sans CJK JP", sans-serif; font-feature-settings: normal; color: #000; }
table { border-collapse: separate; border-spacing: 0; table-layout: fixed; width: 100%; }
.c-n { width: 34px; } .c-a { width: 72px; } .c-b { width: 111px; } .c-c { width: 127px; } .c-d { width: 87px; } .c-e { width: 116px; } .c-f { width: 72px; }
th { font-weight: 300; padding: 0; background: #f0f0f0; }
thead th { height: 25px; border-right: 1px solid #c0c0c0; border-bottom: 1px solid #999; font-size: 14px; }
thead .last { border-right: 0; text-align: left; padding-left: 31px; }
thead .corner { background: linear-gradient(135deg, #f0f0f0 50%, #b2b2b2 50%) 14px 5px / 15px 15px no-repeat #f0f0f0; }
thead .on { background: #d2d2d2; color: #1e6b43; border-bottom: 2px solid #1e7145; }
tbody th { height: 32px; border-right: 1px solid #999; border-bottom: 1px solid #c8c8c8; font-size: 14px; vertical-align: bottom; padding-bottom: 3px; }
td { height: 32px; border-right: 1px solid #e1e1e1; border-bottom: 1px solid #e1e1e1; padding: 0 2px 4px; white-space: nowrap; }
.fill { border-right: 0; background: repeating-linear-gradient(90deg, transparent 0 71px, #e1e1e1 71px 72px); }
.head td { font-weight: 700; text-align: center; }
.head td:not(.fill) { background: #fff2cc; border-right-color: #fff2cc; border-bottom: 1px solid #000; }
.head td.g:not(.fill) { background: #e2efda; border-right-color: #e2efda; }
.d th { background: #d2d2d2; color: #1e6b43; border-right: 2px solid #1e7145; border-bottom-color: #b0b0b0; }
.d td { text-align: right; }
.d td:nth-child(3) { text-align: left; }
.d td:nth-child(4), .d td:nth-child(6) { background: #c6c6c6; border-right-color: #ababab; border-bottom-color: #b0b0b0; box-shadow: inset 1px 0 #fff, inset -1px 0 #fff; }
.d td:nth-child(4) { padding-right: 3px; }
.d td:nth-child(6) { padding-right: 3px; }
.d td.active { background: #fff; box-shadow: inset 0 0 0 1px #fff, inset 0 0 0 2px #1e7145; }
.end td:nth-child(4), .end td:nth-child(6) { box-shadow: inset 1px 0 #fff, inset -1px -1px #fff; }
.arrow { position: absolute; filter: drop-shadow(2px 2px 3px #0008); }
.a1 { left: 254px; top: 68px; }
.a2 { left: 454px; top: 61px; }
.note { position: absolute; left: 103px; margin: 0; font-size: 44px; font-weight: 400; line-height: 60px; color: #f00; white-space: nowrap; -webkit-text-stroke: 7px #fff; paint-order: stroke fill; filter: drop-shadow(2px 3px 3px #000a); }
.note span { font-feature-settings: "hwid"; }
.n1 { top: 546px; } .n2 { top: 628px; }
.vscroll { flex: none; width: 21px; display: flex; flex-direction: column; align-items: center; padding: 6px 0 0; gap: 4px; }
.vscroll i { width: 9px; flex: 1; background: #707070; border-radius: 5px; margin-bottom: 34px; }
.vscroll .dn { margin-bottom: 1px; }

.sheetbar { flex: none; height: 32px; display: flex; align-items: center; font-size: 15px; padding-left: 14px; border-bottom: 1px solid #c4c4c4; }
.nav { width: 34px; display: grid; place-items: center; }
.stab { height: 22px; padding: 0 15px 0 14px; border-right: 1px solid #ccc; }
.stab.on { background: #fff; border: 1px solid #d8d8d8; border-top: 0; border-radius: 0 0 5px 5px; padding: 0 7px; margin: 0 4px 3px 34px; height: 28px; }
.stab.on span { display: block; border-bottom: 2px solid #107c41; padding: 2px 2px 1px; line-height: 19px; }
.plus { margin-left: 40px; }
.hdots { margin-left: auto; font-weight: 700; width: 25px; }
.hscroll { width: 731px; height: 17px; margin-right: 18px; padding: 0 5px; background: #f5f5f5; border-radius: 8px; display: flex; align-items: center; gap: 5px; }
.hscroll i { flex: 1; height: 9px; border-radius: 5px; background: #707070; margin-right: 31px; }

.status { flex: none; height: 22px; background: #f4f4f4; display: flex; align-items: center; font-size: 12px; padding: 0 18px 0 8px; }
.ready { width: 67px; }
.stats { margin-left: auto; margin-right: 31px; display: grid; grid-template-columns: 144px 101px 96px 148px 149px 135px; white-space: nowrap; }
.view { width: 40px; height: 22px; display: grid; place-items: center; }
.view.on { background: #dedede; }
.zb { width: 12px; margin-left: 3px; display: grid; place-items: center; }
.view + .zb { margin-left: 4px; }
.zoom { appearance: none; width: 101px; height: 14px; margin-left: 3px; background: linear-gradient(#777, #777) center / 100% 1px no-repeat; }
.zoom::-webkit-slider-thumb { appearance: none; width: 5px; height: 12px; background: #555; }
.pc { width: 34px; }
.zb + .pc { margin-left: 11px; }
```
